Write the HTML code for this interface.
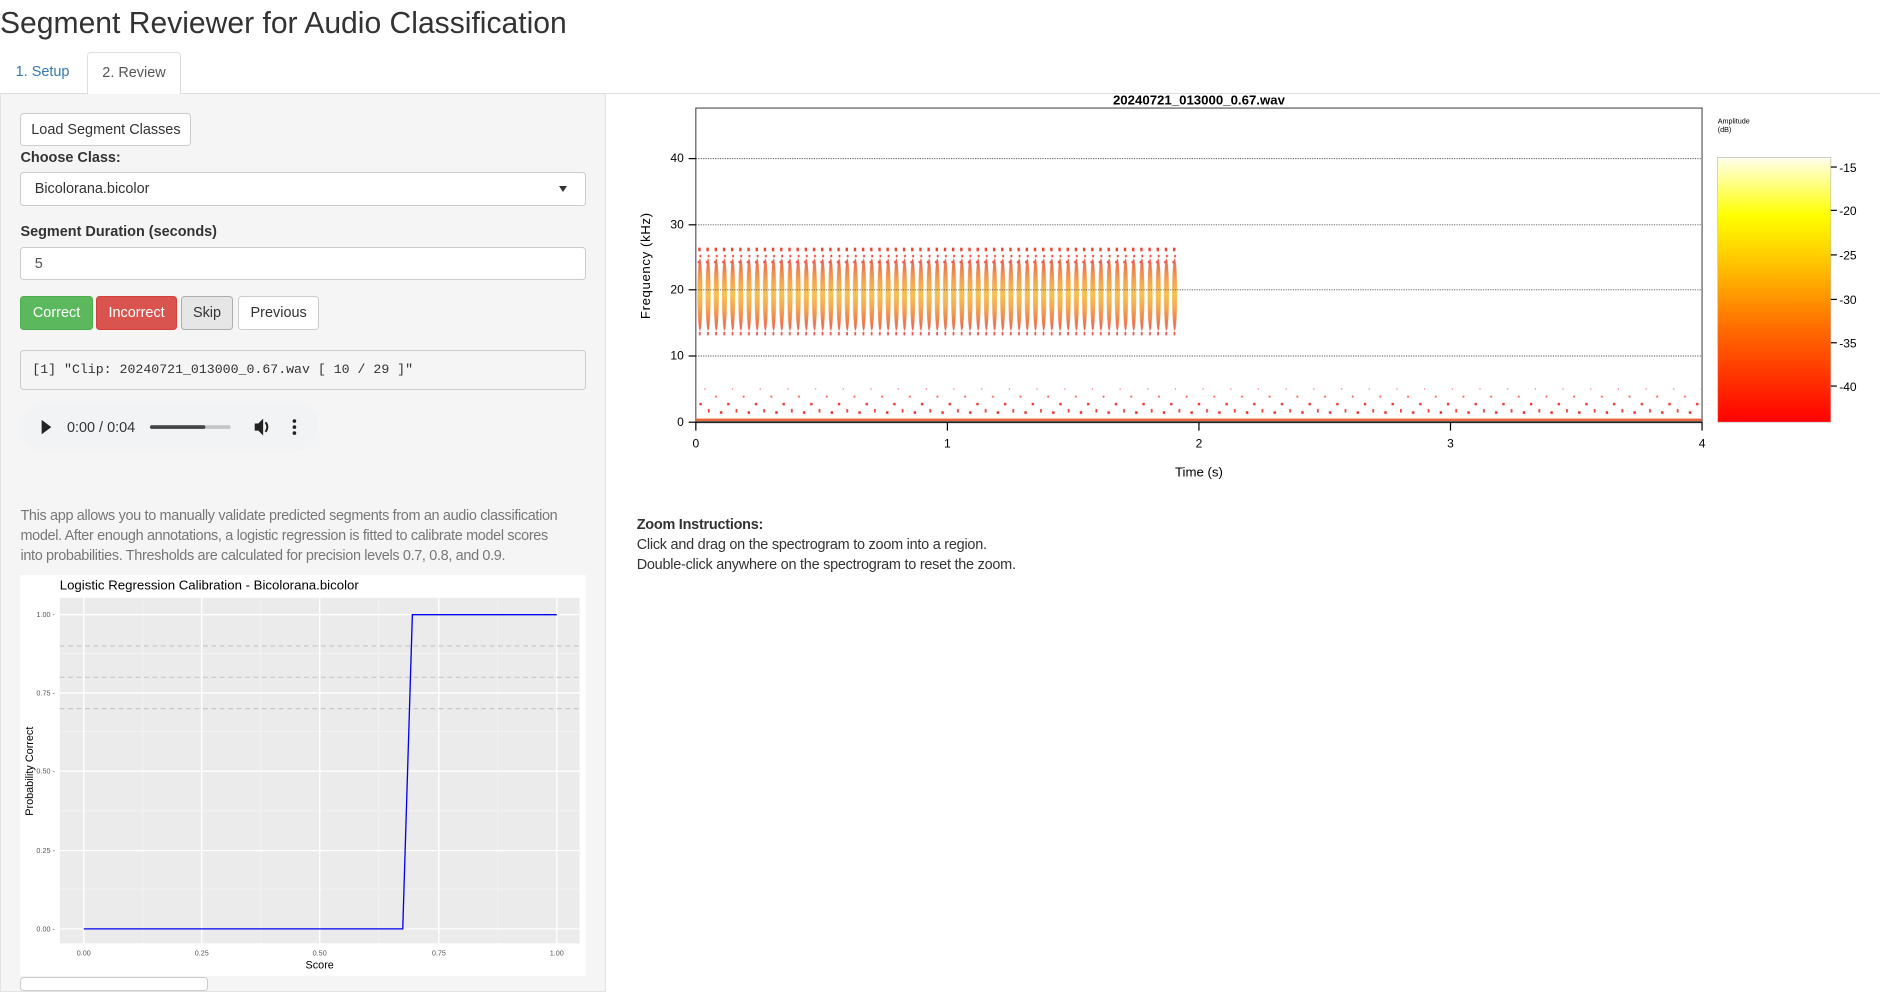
<!DOCTYPE html>
<html><head><meta charset="utf-8">
<style>
html{zoom:1.2036}
body{margin:0;width:1562px;height:814px;overflow:hidden;background:#fff;font-family:"Liberation Sans",Arial,sans-serif;color:#333;font-size:12px;position:relative}
.abs{position:absolute}
h2{position:absolute;left:0;top:6px;margin:0;font-weight:400;font-size:25px;color:#333}
.tabline{position:absolute;left:0;top:77px;width:1562px;border-top:1px solid #ddd}
.tab1{left:13px;top:53px;color:#337ab7;font-size:12px}
.tab2{left:72px;top:43px;width:77px;height:34px;border:1px solid #ddd;border-bottom:1px solid #fff;border-radius:3px 3px 0 0;background:#fff;color:#555;text-align:center;line-height:34px;font-size:12px}
.panel{left:0;top:78px;width:502px;height:745px;background:#f5f5f5;border:1px solid #e3e3e3;border-top:none}
.btn{position:absolute;box-sizing:border-box;border:1px solid #ccc;border-radius:3px;background:#fff;text-align:center;font-size:12px;color:#333}
.inp{position:absolute;box-sizing:border-box;left:17px;width:470px;height:28px;border:1px solid #ccc;border-radius:3px;background:#fff;padding-left:11px;line-height:26px;font-size:12px}
.lbl{position:absolute;left:17px;font-weight:700;font-size:12px}
</style></head><body>
<h2>Segment Reviewer for Audio Classification</h2>
<div class="tabline"></div>
<div class="abs tab1">1. Setup</div>
<div class="abs tab2">2. Review</div>
<div class="abs panel"></div>
<div class="btn" style="left:17px;top:94px;width:142px;height:27px;line-height:27px">Load Segment Classes</div>
<div class="lbl" style="top:125px">Choose Class:</div>
<div class="inp" style="top:143px;line-height:28px">Bicolorana.bicolor<span style="position:absolute;right:15px;top:11px;border-left:4px solid transparent;border-right:4px solid transparent;border-top:5px solid #333"></span></div>
<div class="lbl" style="top:186px">Segment Duration (seconds)</div>
<div class="inp" style="top:205px;color:#555;line-height:28px">5</div>
<div class="btn" style="left:17px;top:246px;width:60px;height:28px;line-height:28px;background:#5cb85c;border-color:#4cae4c;color:#fff">Correct</div>
<div class="btn" style="left:80px;top:246px;width:67px;height:28px;line-height:28px;background:#d9534f;border-color:#d43f3a;color:#fff">Incorrect</div>
<div class="btn" style="left:150px;top:246px;width:44px;height:28px;line-height:28px;background:#e6e6e6;border-color:#adadad">Skip</div>
<div class="btn" style="left:198px;top:246px;width:67px;height:28px;line-height:28px">Previous</div>
<div class="abs" style="left:17px;top:291px;width:470px;height:33px;box-sizing:border-box;border:1px solid #ccc;border-radius:3px;background:#f5f5f5;font-family:'Liberation Mono',monospace;font-size:11px;line-height:31px;padding-left:9px">[1] "Clip: 20240721_013000_0.67.wav [ 10 / 29 ]"</div>
<div class="abs" style="left:17px;top:335px;width:248px;height:40px;border-radius:20px;background:#f1f3f4"></div>
<svg class="abs" style="left:17px;top:335px" width="250" height="40">
<path d="M18 14 L26 20 L18 26Z" fill="#222"/>
<text x="39" y="24" font-size="12" fill="#333" font-family="Liberation Sans">0:00 / 0:04</text>
<rect x="108" y="18.5" width="67" height="3" rx="1.5" fill="#c4c4c4"/>
<rect x="108" y="18.5" width="46" height="3" rx="1.5" fill="#444"/>
<path d="M195 17h3l4-4v14l-4-4h-3z" fill="#222"/><path d="M204 16q3 4 0 8" stroke="#222" stroke-width="1.6" fill="none"/>
<circle cx="228" cy="15" r="1.5" fill="#222"/><circle cx="228" cy="20" r="1.5" fill="#222"/><circle cx="228" cy="25" r="1.5" fill="#222"/>
</svg>
<div class="abs" style="left:17px;top:420px;color:#777;font-size:12px;line-height:17px;white-space:nowrap;letter-spacing:-0.28px">This app allows you to manually validate predicted segments from an audio classification<br>model. After enough annotations, a logistic regression is fitted to calibrate model scores<br>into probabilities. Thresholds are calculated for precision levels 0.7, 0.8, and 0.9.</div>
<svg class="abs" style="left:17px;top:478px" width="470" height="333" font-family="Liberation Sans">
<rect width="470" height="333" fill="#fff"/>
<text x="33" y="12" font-size="11" fill="#000">Logistic Regression Calibration - Bicolorana.bicolor</text>
<rect x="33" y="19" width="432" height="287" fill="#ebebeb"/>
<g stroke="#f5f5f5" stroke-width="0.6"><line x1="33" x2="465" y1="65" y2="65"/><line x1="33" x2="465" y1="130" y2="130"/><line x1="33" x2="465" y1="196" y2="196"/><line x1="33" x2="465" y1="261" y2="261"/><line y1="19" y2="306" x1="102" x2="102"/><line y1="19" y2="306" x1="200" x2="200"/><line y1="19" y2="306" x1="298" x2="298"/><line y1="19" y2="306" x1="397" x2="397"/></g>
<g stroke="#fff" stroke-width="1.1"><line x1="33" x2="465" y1="33" y2="33"/><line x1="33" x2="465" y1="98" y2="98"/><line x1="33" x2="465" y1="163" y2="163"/><line x1="33" x2="465" y1="229" y2="229"/><line x1="33" x2="465" y1="294" y2="294"/><line y1="19" y2="306" x1="53" x2="53"/><line y1="19" y2="306" x1="151" x2="151"/><line y1="19" y2="306" x1="249" x2="249"/><line y1="19" y2="306" x1="348" x2="348"/><line y1="19" y2="306" x1="446" x2="446"/></g>
<g stroke="#c8c8c8" stroke-dasharray="4,3"><line x1="33" x2="465" y1="59" y2="59"/><line x1="33" x2="465" y1="85" y2="85"/><line x1="33" x2="465" y1="111" y2="111"/></g>
<polyline points="53,294 318,294 326,33 446,33" fill="none" stroke="#0000ee" stroke-width="1.1"/>
<g font-size="6" fill="#555" text-anchor="end"><text x="29" y="35">1.00 -</text><text x="29" y="100">0.75 -</text><text x="29" y="165">0.50 -</text><text x="29" y="231">0.25 -</text><text x="29" y="296">0.00 -</text></g>
<g font-size="6" fill="#555" text-anchor="middle"><text x="53" y="316">0.00</text><text x="151" y="316">0.25</text><text x="249" y="316">0.50</text><text x="348" y="316">0.75</text><text x="446" y="316">1.00</text></g>
<text x="249" y="327" font-size="9" text-anchor="middle" fill="#000">Score</text>
<text transform="translate(11,163) rotate(-90)" font-size="9" text-anchor="middle" fill="#000">Probability Correct</text>
</svg>
<div class="abs" style="left:17px;top:812px;width:154px;height:10px;border:1px solid #ccc;border-radius:3px;background:#fff"></div>

<svg class="abs" style="left:510px;top:75px" width="1052" height="340" font-family="Liberation Sans">
<defs>
<linearGradient id="sg" x1="0" y1="0" x2="0" y2="1"><stop offset="0" stop-color="#e8503a"/><stop offset="0.3" stop-color="#f29a40"/><stop offset="0.5" stop-color="#f5bc40"/><stop offset="0.7" stop-color="#f29a40"/><stop offset="1" stop-color="#e8503a"/></linearGradient>
<pattern id="st" patternUnits="userSpaceOnUse" x="68" y="0" width="6.8" height="340">
<ellipse cx="3.4" cy="170" rx="2.1" ry="30" fill="url(#sg)" opacity="0.9"/>
<rect x="2" y="131" width="2" height="3" fill="#e43"/><rect x="3" y="137" width="1.5" height="2" fill="#e43"/><rect x="1.5" y="142" width="2" height="2" fill="#e55"/><rect x="2.5" y="201" width="1.5" height="3" fill="#e55"/>
</pattern>
<pattern id="nz" patternUnits="userSpaceOnUse" width="23" height="30">
<rect x="2" y="20" width="2" height="2" fill="#e33"/><rect x="9" y="25" width="1.5" height="3" fill="#e44"/><rect x="15" y="14" width="1.5" height="1.5" fill="#f55"/><rect x="19" y="27" width="2" height="2" fill="#e22"/><rect x="6" y="8" width="1" height="1" fill="#f66"/>
</pattern>
<linearGradient id="cb" x1="0" y1="1" x2="0" y2="0"><stop offset="0" stop-color="#ff0000"/><stop offset="0.35" stop-color="#ff6a00"/><stop offset="0.6" stop-color="#ffc400"/><stop offset="0.78" stop-color="#ffff00"/><stop offset="1" stop-color="#ffffee"/></linearGradient>
</defs>
<text x="486" y="12" font-size="11" font-weight="700" text-anchor="middle" fill="#000">20240721_013000_0.67.wav</text>
<rect x="68" y="15" width="836" height="261" fill="#fff" stroke="#333" stroke-width="0.8"/>
<rect x="68" y="128" width="402" height="76" fill="url(#st)"/>
<rect x="68" y="244" width="836" height="31" fill="url(#nz)"/>
<rect x="68" y="273" width="836" height="2" fill="#e8643a"/>
<g stroke="#555" stroke-dasharray="1,1" stroke-width="0.8"><line x1="68" x2="904" y1="57" y2="57"/><line x1="68" x2="904" y1="112" y2="112"/><line x1="68" x2="904" y1="166" y2="166"/><line x1="68" x2="904" y1="221" y2="221"/></g>
<line x1="68" x2="904" y1="276" y2="276" stroke="#222" stroke-width="1.5"/>
<g font-size="10" fill="#000" text-anchor="end"><text x="58" y="60">40</text><text x="58" y="115">30</text><text x="58" y="169">20</text><text x="58" y="224">10</text><text x="58" y="279">0</text></g>
<g stroke="#000"><line x1="62" x2="68" y1="57" y2="57"/><line x1="62" x2="68" y1="112" y2="112"/><line x1="62" x2="68" y1="166" y2="166"/><line x1="62" x2="68" y1="221" y2="221"/><line x1="62" x2="68" y1="276" y2="276"/>
<line x1="68" x2="68" y1="276" y2="283"/><line x1="277" x2="277" y1="276" y2="283"/><line x1="486" x2="486" y1="276" y2="283"/><line x1="695" x2="695" y1="276" y2="283"/><line x1="904" x2="904" y1="276" y2="283"/></g>
<g font-size="10" fill="#000" text-anchor="middle"><text x="68" y="297">0</text><text x="277" y="297">1</text><text x="486" y="297">2</text><text x="695" y="297">3</text><text x="904" y="297">4</text></g>
<text x="486" y="321" font-size="11" text-anchor="middle" fill="#000">Time (s)</text>
<text transform="translate(30,146) rotate(-90)" font-size="11" text-anchor="middle" fill="#000" letter-spacing="0.5">Frequency (kHz)</text>
<text x="917" y="28" font-size="6" fill="#000">Amplitude</text><text x="917" y="35" font-size="6" fill="#000">(dB)</text>
<rect x="917" y="56" width="94" height="220" fill="url(#cb)" stroke="#bbb" stroke-width="0.6"/>
<g stroke="#000"><line x1="1011" x2="1016" y1="64" y2="64"/><line x1="1011" x2="1016" y1="100" y2="100"/><line x1="1011" x2="1016" y1="137" y2="137"/><line x1="1011" x2="1016" y1="174" y2="174"/><line x1="1011" x2="1016" y1="210" y2="210"/><line x1="1011" x2="1016" y1="246" y2="246"/></g>
<g font-size="10" fill="#000"><text x="1018" y="68">-15</text><text x="1018" y="104">-20</text><text x="1018" y="141">-25</text><text x="1018" y="178">-30</text><text x="1018" y="214">-35</text><text x="1018" y="250">-40</text></g>
</svg>
<div class="abs" style="left:529px;top:429px;font-size:12px;line-height:16.5px;color:#333;letter-spacing:-0.2px"><b>Zoom Instructions:</b><br>Click and drag on the spectrogram to zoom into a region.<br>Double-click anywhere on the spectrogram to reset the zoom.</div>
</body></html>
